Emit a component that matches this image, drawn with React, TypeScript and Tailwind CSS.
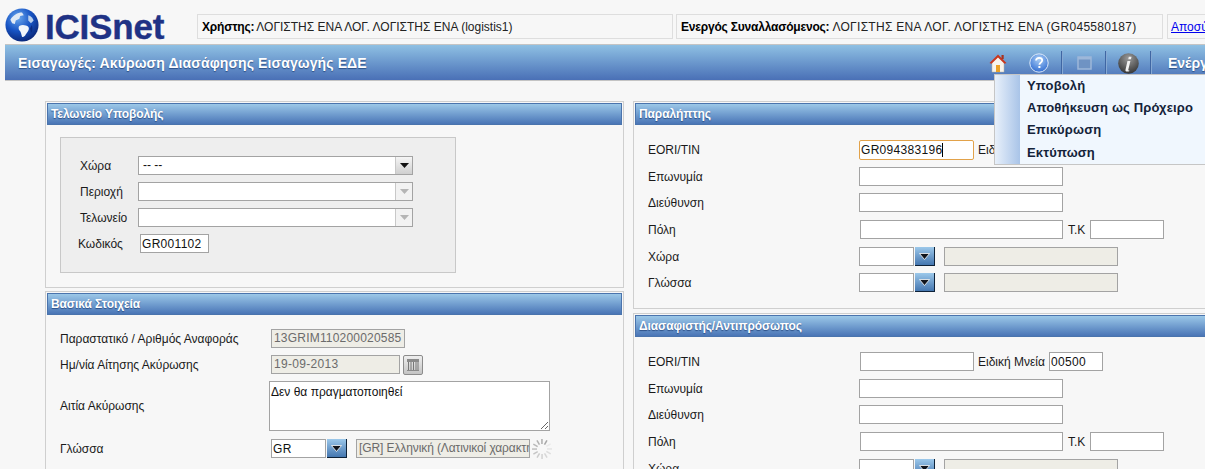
import React from "react";

const inputCls =
  "block h-[19px] border border-[#a3a3a3] bg-white pl-[1px] text-[12px] leading-[17px] tracking-[0.3px] text-[#111] outline-none";
const disabledCls =
  "block h-[19px] border border-[#a3a3a3] bg-[#eeede6] pl-[2px] text-[12px] leading-[17px] text-[#6b6b6b] overflow-hidden whitespace-nowrap";

const SectionHeader = ({ title }: { title: string }) => (
  <div className="mx-px mt-px flex h-[22px] items-center border border-[#4a74ad] bg-gradient-to-b from-[#9cc8e8] to-[#4a75b6] pl-[3px] text-[12px] font-bold tracking-[-0.1px] text-white [text-shadow:0_1px_1px_#2c4f86]">
    {title}
  </div>
);

const Label = ({ children, className = "" }: { children: React.ReactNode; className?: string }) => (
  <span className={`text-[12px] text-[#1a1a1a] ${className}`}>{children}</span>
);

const Arrow = ({ color }: { color: string }) => (
  <svg width="9" height="5" viewBox="0 0 9 5">
    <path d="M0 0h9L4.5 5z" fill={color} />
  </svg>
);

const Combo = ({ value, disabled }: { value?: string; disabled?: boolean }) => (
  <div className="flex h-[19px] w-[275px] border border-[#a3a3a3] bg-white">
    <span className="flex-1 pl-[4px] text-[12px] leading-[17px] text-[#111]">{value}</span>
    <span
      className={`flex w-[17px] items-center justify-center border-l border-[#c8c8c8] ${
        disabled ? "bg-[#f2f2f2]" : "bg-gradient-to-b from-[#f5f5f5] to-[#cfcfcf]"
      }`}
    >
      <Arrow color={disabled ? "#b5b5b5" : "#111"} />
    </span>
  </div>
);

const BlueButton = () => (
  <span className="flex h-[19px] w-[20px] items-center justify-center border-r border-b border-[#0e2238] bg-gradient-to-b from-[#9cc8ea] to-[#4577b0]">
    <svg width="11" height="7" viewBox="0 0 11 7">
      <path d="M0.5 0.5h10L5.5 6.5z" fill="#10141c" stroke="#fff" strokeWidth="0.8" />
    </svg>
  </span>
);

const Lookup = () => (
  <>
    <input readOnly className={`${inputCls} w-[55px]`} />
    <span className="ml-[1px]">
      <BlueButton />
    </span>
    <span className={`${disabledCls} ml-[9px] w-[174px]`} />
  </>
);

const Row = ({
  label,
  top,
  children,
  labelWidth = "w-[211px]",
}: {
  label: string;
  top: string;
  children: React.ReactNode;
  labelWidth?: string;
}) => (
  <div className={`flex h-[19px] items-center ${top}`}>
    <Label className={`${labelWidth} shrink-0`}>{label}</Label>
    {children}
  </div>
);

const Spinner = () => (
  <svg width="22" height="22" viewBox="0 0 22 22" className="ml-[1px]">
    {[0, 30, 60, 90, 120, 150, 180, 210, 240, 270, 300, 330].map((deg, i) => (
      <rect
        key={deg}
        x="10.2"
        y="1"
        width="1.5"
        height="5"
        fill="#8d8d8d"
        opacity={0.12 + (((i + 10) % 12) / 12) * 0.7}
        transform={`rotate(${deg} 11 11)`}
      />
    ))}
  </svg>
);

const Globe = () => (
  <svg width="34" height="34" viewBox="0 0 38 38" className="shrink-0">
    <defs>
      <radialGradient id="globeFill" cx="0.38" cy="0.28" r="0.8">
        <stop offset="0" stopColor="#6aa8ee" />
        <stop offset="0.5" stopColor="#1754c4" />
        <stop offset="1" stopColor="#08206e" />
      </radialGradient>
    </defs>
    <circle cx="19" cy="19" r="18.5" fill="url(#globeFill)" />
    <path d="M6 13c3-5 8-8 13-8l2 3-4 1-1 3-4 2-1 4-3-1z" fill="#dfe9f5" />
    <path d="M16 20c3-2 8-1 10 1 2 3-1 6-3 9-1 2-3 3-4 2-1-3-1-5-3-7-1-2-1-4 0-5z" fill="#f1f5fa" />
    <path d="M26 8c3 1 5 3 6 6l-3 3-3-3z" fill="#b9cfec" />
    <path d="M30 19c1 3 1 7-1 9l-1-5z" fill="#0b2b82" />
  </svg>
);

const HouseIcon = () => (
  <svg width="18" height="20" viewBox="0 0 18 20">
    <path d="M3 9l6-6 6 6v10H3z" fill="#f8f4ec" stroke="#b9b0a0" strokeWidth="0.5" />
    <path d="M0.5 10L9 1.5 17.5 10l-2 0.8L9 4.5 2.5 10.8z" fill="#c9371e" />
    <rect x="12.5" y="2" width="2.2" height="4" fill="#a8321e" />
    <rect x="7" y="12" width="4" height="7" fill="#eba127" />
  </svg>
);

const HelpIcon = () => (
  <svg width="20" height="20" viewBox="0 0 20 20">
    <defs>
      <radialGradient id="helpFill" cx="0.5" cy="0.3" r="0.75">
        <stop offset="0" stopColor="#a8cdf5" />
        <stop offset="1" stopColor="#2b68d0" />
      </radialGradient>
    </defs>
    <circle cx="10" cy="10" r="9.2" fill="url(#helpFill)" stroke="#dce9f8" strokeWidth="1" />
    <path
      d="M7 7.5c.2-1.8 1.5-2.7 3.2-2.7 1.8 0 3 1 3 2.5 0 1.4-.9 2-1.8 2.6-.7.5-1 .9-1 1.8"
      fill="none"
      stroke="#fff"
      strokeWidth="1.8"
    />
    <rect x="9.4" y="13" width="2" height="2" fill="#fff" />
  </svg>
);

const WindowIcon = () => (
  <svg width="15" height="14" viewBox="0 0 15 14">
    <rect x="1" y="1" width="13" height="12" fill="#6f93c3" stroke="#9db7d9" strokeWidth="1.5" />
    <rect x="1" y="1" width="13" height="2.5" fill="#9db7d9" />
  </svg>
);

const InfoIcon = () => (
  <svg width="21" height="21" viewBox="0 0 20 20">
    <defs>
      <radialGradient id="infoFill" cx="0.5" cy="0.25" r="0.8">
        <stop offset="0" stopColor="#9a9a9a" />
        <stop offset="1" stopColor="#2f2f2f" />
      </radialGradient>
    </defs>
    <circle cx="10" cy="10" r="9.8" fill="url(#infoFill)" />
    <path d="M10.3 3.5h2.6l-.6 2.4H9.8zM9 7.5h2.8l-2 8.5c-.1.6.4.7 1 .4l-.1.9c-2 .7-3.9.4-3.6-1.2z" fill="#f2f2f2" />
  </svg>
);

const CalendarButton = () => (
  <span className="ml-[3px] flex h-[20px] w-[20px] items-center justify-center rounded-[2px] border border-[#8c8c8c] bg-gradient-to-b from-[#efefef] to-[#c4c4c4]">
    <svg width="12" height="12" viewBox="0 0 12 12">
      <rect x="0" y="0" width="12" height="3" fill="#8a8a8a" />
      <path d="M1.5 3v8M4 3v8M6.5 3v8M9 3v8M11 3v8" stroke="#777" strokeWidth="1" />
      <rect x="0" y="11" width="12" height="1" fill="#8a8a8a" />
    </svg>
  </span>
);

const Separator = () => <span className="block h-[25px] w-[2px] border-r border-[#86a9d3] bg-[#3f66a3]" />;

export default function App() {
  return (
    <div
      className="relative h-[469px] w-[1205px] overflow-hidden bg-[#f7f7f7] text-[12px]"
      style={{ fontFamily: '"Liberation Sans", Arial, sans-serif' }}
    >
      {/* top strip */}
      <div className="flex h-[44px]">
        <div className="flex w-[197px] shrink-0 items-start pl-[5px] pt-[8px]">
          <Globe />
          <span className="-mt-[3px] ml-[6px] text-[35px] font-bold leading-[44px] tracking-[-0.2px] text-[#1f3285] [-webkit-text-stroke:0.4px_#1f3285]">
            ICISnet
          </span>
        </div>
        <div className="mt-[14px] flex h-[25px] w-[476px] shrink-0 items-center whitespace-nowrap border border-[#dedede] bg-[#f7f7f7] pl-[4px]">
          <b className="font-bold tracking-[-0.2px] text-black">Χρήστης:</b>
          <span className="ml-[2px] text-[#222]">ΛΟΓΙΣΤΗΣ ΕΝΑ ΛΟΓ. ΛΟΓΙΣΤΗΣ ΕΝΑ (logistis1)</span>
        </div>
        <div className="ml-[3px] mt-[14px] flex h-[25px] w-[487px] shrink-0 items-center whitespace-nowrap border border-[#dedede] pl-[4px]">
          <b className="font-bold tracking-[-0.2px] text-black">Ενεργός Συναλλασόμενος:</b>
          <span className="ml-[3px] tracking-[0.3px] text-[#222]">ΛΟΓΙΣΤΗΣ ΕΝΑ ΛΟΓ. ΛΟΓΙΣΤΗΣ ΕΝΑ (GR045580187)</span>
        </div>
        <div className="ml-[4px] mt-[14px] flex h-[25px] w-[80px] shrink-0 items-center whitespace-nowrap border border-[#dedede] pl-[3px]">
          <span className="text-[#0000ee] underline">Αποσύνδεση</span>
        </div>
      </div>

      {/* title bar */}
      <div className="ml-[5px] flex h-[37px] w-[1300px] items-center border-y border-[#c4c4c4] bg-gradient-to-b from-[#8fc0e3] to-[#4a70b6] pl-[13px] pt-[1px]">
        <span className="w-[971px] shrink-0 text-[14px] font-bold tracking-[0.1px] text-white [text-shadow:0_1px_1px_#2c4f86]">
          Εισαγωγές: Ακύρωση Διασάφησης Εισαγωγής ΕΔΕ
        </span>
        <span className="flex w-[33px] shrink-0 justify-start"><HouseIcon /></span>
        <span className="ml-[-4px] flex w-[41px] shrink-0 justify-center"><HelpIcon /></span>
        <span className="ml-[2px]"><Separator /></span>
        <span className="flex w-[42px] shrink-0 justify-center"><WindowIcon /></span>
        <Separator />
        <span className="flex w-[43px] shrink-0 justify-center"><InfoIcon /></span>
        <Separator />
        <span className="ml-[16px] text-[14px] font-bold text-white [text-shadow:0_1px_1px_#2c4f86]">Ενέργειες</span>
      </div>

      {/* two columns */}
      <div className="mt-[20px] flex items-start pl-[45px]">
        <div className="w-[579px] shrink-0">
          <section className="h-[187px] border border-[#cfcfcf]">
            <SectionHeader title="Τελωνείο Υποβολής" />
            <div className="ml-[14px] mt-[12px] h-[136px] w-[396px] border border-[#c8c8c8] bg-[#eeeeee] pl-[19px] pt-[18px]">
              <div className="flex h-[19px] items-center">
                <Label className="w-[58px] shrink-0">Χώρα</Label>
                <Combo value="-- --" />
              </div>
              <div className="mt-[7px] flex h-[19px] items-center">
                <Label className="w-[58px] shrink-0">Περιοχή</Label>
                <Combo disabled />
              </div>
              <div className="mt-[7px] flex h-[19px] items-center">
                <Label className="w-[58px] shrink-0">Τελωνείο</Label>
                <Combo disabled />
              </div>
              <div className="mt-[7px] flex h-[19px] items-center">
                <Label className="-ml-[2px] w-[62px] shrink-0">Κωδικός</Label>
                <input readOnly value="GR001102" className={`${inputCls} w-[69px]`} />
              </div>
            </div>
          </section>
          <section className="mt-[3px] h-[200px] border border-[#cfcfcf] pl-0">
            <SectionHeader title="Βασικά Στοιχεία" />
            <div className="pl-[14px]">
              <Row label="Παραστατικό / Αριθμός Αναφοράς" top="mt-[14px]">
                <span className={`${disabledCls} w-[134px] tracking-[0.2px]`}>13GRIM110200020585</span>
              </Row>
              <Row label="Ημ/νία Αίτησης Ακύρωσης" top="mt-[7px]">
                <span className={`${disabledCls} w-[129px] tracking-[0.3px]`}>19-09-2013</span>
                <CalendarButton />
              </Row>
              <div className="mt-[7px] flex h-[50px] items-center">
                <Label className="w-[209px] shrink-0">Αιτία Ακύρωσης</Label>
                <textarea
                  readOnly
                  value="Δεν θα πραγματοποιηθεί"
                  className="block h-[50px] w-[281px] border border-[#a3a3a3] bg-white pl-[1px] pt-[3px] text-[12px] leading-[14px] text-[#111] outline-none"
                />
              </div>
              <Row label="Γλώσσα" top="mt-[8px]">
                <input readOnly value="GR" className={`${inputCls} w-[55px]`} />
                <span className="ml-[1px]"><BlueButton /></span>
                <span className={`${disabledCls} ml-[9px] w-[174px] tracking-[-0.1px]`}>[GR] Ελληνική (Λατινικοί χαρακτήρες)</span>
                <Spinner />
              </Row>
            </div>
          </section>
        </div>

        <div className="ml-[9px] w-[700px] shrink-0">
          <section className="h-[208px] border border-[#cfcfcf]">
            <SectionHeader title="Παραλήπτης" />
            <div className="pl-[14px]">
              <Row label="EORI/TIN" top="mt-[15px]">
                <div className="flex h-[20px] w-[115px] items-center rounded-[2px] border border-[#e2a24a] bg-white pl-[1px] text-[12px] tracking-[0.3px] text-[#111]">
                  GR094383196
                  <span className="h-[14px] w-px bg-black" />
                </div>
                <Label className="ml-[4px]">Ειδική Μνεία</Label>
              </Row>
              <Row label="Επωνυμία" top="mt-[8px]">
                <input readOnly className={`${inputCls} w-[204px]`} />
              </Row>
              <Row label="Διεύθυνση" top="mt-[7px]">
                <input readOnly className={`${inputCls} w-[204px]`} />
              </Row>
              <Row label="Πόλη" top="mt-[8px]" labelWidth="w-[212px]">
                <input readOnly className={`${inputCls} w-[203px]`} />
                <Label className="ml-[5px]">Τ.Κ</Label>
                <input readOnly className={`${inputCls} ml-[5px] w-[74px]`} />
              </Row>
              <Row label="Χώρα" top="mt-[8px]">
                <Lookup />
              </Row>
              <Row label="Γλώσσα" top="mt-[7px]">
                <Lookup />
              </Row>
            </div>
          </section>
          <section className="mt-[4px] h-[200px] border border-[#cfcfcf]">
            <SectionHeader title="Διασαφιστής/Αντιπρόσωπος" />
            <div className="pl-[14px]">
              <Row label="EORI/TIN" top="mt-[15px]" labelWidth="w-[212px]">
                <input readOnly className={`${inputCls} w-[114px]`} />
                <Label className="ml-[4px]">Ειδική Μνεία</Label>
                <input readOnly value="00500" className={`${inputCls} ml-[4px] w-[54px]`} />
              </Row>
              <Row label="Επωνυμία" top="mt-[8px]">
                <input readOnly className={`${inputCls} w-[204px]`} />
              </Row>
              <Row label="Διεύθυνση" top="mt-[7px]">
                <input readOnly className={`${inputCls} w-[204px]`} />
              </Row>
              <Row label="Πόλη" top="mt-[8px]" labelWidth="w-[212px]">
                <input readOnly className={`${inputCls} w-[203px]`} />
                <Label className="ml-[5px]">Τ.Κ</Label>
                <input readOnly className={`${inputCls} ml-[5px] w-[74px]`} />
              </Row>
              <Row label="Χώρα" top="mt-[8px]">
                <Lookup />
              </Row>
            </div>
          </section>
        </div>
      </div>

      {/* toolbar dropdown */}
      <div className="absolute left-[994px] top-[74px] flex h-[91px] w-[230px] border border-[#c6c6c6] bg-[#f0f7fe]">
        <div className="w-[25px] shrink-0 bg-gradient-to-r from-[#e8f0fa] to-[#a9c4e8]" />
        <div className="flex flex-col pl-[7px] text-[13px] font-bold tracking-[0.15px] text-[#14233a]">
          <span className="h-[22px] leading-[21px]">Υποβολή</span>
          <span className="h-[22px] leading-[21px]">Αποθήκευση ως Πρόχειρο</span>
          <span className="h-[22px] leading-[21px]">Επικύρωση</span>
          <span className="mt-[1px] h-[22px] leading-[21px]">Εκτύπωση</span>
        </div>
      </div>
    </div>
  );
}
